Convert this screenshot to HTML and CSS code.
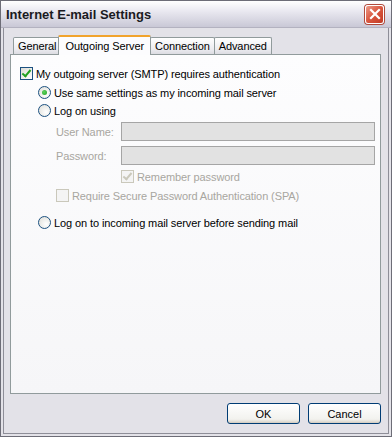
FILE: index.html
```html
<!DOCTYPE html>
<html lang="en">
<head>
    <meta charset="UTF-8">
    <title>Internet E-mail Settings</title>
    <link rel="stylesheet" href="styles.css">
</head>
<body>
    <div class="window">
        <div class="titlebar">
            <span class="title">Internet E-mail Settings</span>
            <div class="close-btn" title="Close">
                <svg width="12" height="12" viewBox="0 0 12 12">
                    <path d="M2 2 L10 10 M10 2 L2 10" stroke="#fff" stroke-width="2.2" stroke-linecap="square"/>
                </svg>
            </div>
        </div>

        <div class="body">
            <div class="tabs">
                <div class="tab">General</div>
                <div class="tab active">Outgoing Server</div>
                <div class="tab">Connection</div>
                <div class="tab">Advanced</div>
            </div>

            <div class="panel">
                <label class="row top">
                    <span class="check checked"></span>
                    My outgoing server (SMTP) requires authentication
                </label>

                <div class="group">
                    <label class="row">
                        <span class="radio selected"></span>
                        Use same settings as my incoming mail server
                    </label>
                    <label class="row">
                        <span class="radio"></span>
                        Log on using
                    </label>

                    <div class="fields">
                        <div class="field">
                            <span class="field-label">User Name:</span>
                            <span class="input"></span>
                        </div>
                        <div class="field">
                            <span class="field-label">Password:</span>
                            <span class="input"></span>
                        </div>
                        <label class="row disabled remember">
                            <span class="check checked disabled"></span>
                            Remember password
                        </label>
                        <label class="row disabled spa">
                            <span class="check disabled"></span>
                            Require Secure Password Authentication (SPA)
                        </label>
                    </div>

                    <label class="row last">
                        <span class="radio"></span>
                        Log on to incoming mail server before sending mail
                    </label>
                </div>
            </div>

            <div class="buttons">
                <button class="btn">OK</button>
                <button class="btn">Cancel</button>
            </div>
        </div>
    </div>
</body>
</html>
```

FILE: styles.css
```css
html, body {
    margin: 0;
    padding: 0;
    background-color: #e3e2e8;
    font-family: "Liberation Sans", Arial, sans-serif;
    font-size: 11px;
    letter-spacing: -0.1px;
    color: #000;
}

.window {
    width: 392px;
    height: 437px;
    box-sizing: border-box;
    border: 1px solid #6d6d77;
    box-shadow: inset 0 0 0 2px #e3e2e8, inset 0 0 0 3px #8e8e98;
    display: flex;
    flex-direction: column;
}

.titlebar {
    height: 26px;
    display: flex;
    align-items: center;
    justify-content: space-between;
    padding: 0 6px 0 5px;
    background: linear-gradient(#ffffff, #e9e8f0 40%, #c9c8d6);
    border-bottom: 1px solid #b3b2c0;
}

.title {
    font-weight: bold;
    font-size: 13px;
    letter-spacing: 0;
    color: #1a1a22;
}

.close-btn {
    width: 17px;
    height: 17px;
    border: 1px solid #fff;
    border-radius: 3px;
    background: linear-gradient(135deg, #ec9a88, #d9563f 50%, #c23a24);
    display: flex;
    align-items: center;
    justify-content: center;
    box-shadow: 0 0 0 1px #b14a3c;
    margin-right: 1px;
}

.body {
    flex: 1;
    padding: 6px 10px 12px 9px;
    display: flex;
    flex-direction: column;
}

.tabs {
    display: flex;
    align-items: flex-end;
    padding-left: 3px;
    height: 20px;
}

.tab {
    height: 16px;
    line-height: 16px;
    padding: 0 4px;
    border: 1px solid #919b9c;
    border-bottom: none;
    border-radius: 2px 2px 0 0;
    background: linear-gradient(#ffffff, #ececf0 70%, #dcdce2);
    margin-right: -1px;
}

.tab.active {
    height: 18px;
    line-height: 18px;
    background: #fcfcfe;
    border-top: 2px solid #f1a32c;
    margin: 0 -1px -1px -2px;
    padding: 0 6px;
    position: relative;
    z-index: 1;
}

.panel {
    flex: 1;
    border: 1px solid #919b9c;
    background: linear-gradient(#fdfdfe, #f6f6f8);
    padding: 12px 0 0 9px;
}

.row {
    display: flex;
    align-items: center;
    gap: 3px;
    height: 13px;
    white-space: nowrap;
}

.row.top {
    margin-bottom: 6px;
}

.group {
    padding-left: 18px;
    display: flex;
    flex-direction: column;
    gap: 5px;
}

.check {
    width: 11px;
    height: 11px;
    border: 1px solid #1c5180;
    background: linear-gradient(135deg, #dcdcd6, #ffffff);
    position: relative;
    flex-shrink: 0;
}

.check.checked::after {
    content: "";
    position: absolute;
    left: 3px;
    top: 0;
    width: 3px;
    height: 7px;
    border: solid #21a121;
    border-width: 0 2px 2px 0;
    transform: rotate(40deg);
}

.check.disabled {
    border-color: #cac8bb;
    background: #f4f4f4;
}

.check.checked.disabled::after {
    border-color: #cac8bb;
}

.radio {
    width: 11px;
    height: 11px;
    border: 1px solid #1c5180;
    border-radius: 50%;
    background: radial-gradient(circle at 65% 65%, #ffffff, #dcdcd6);
    position: relative;
    flex-shrink: 0;
}

.radio.selected::after {
    content: "";
    position: absolute;
    left: 3px;
    top: 3px;
    width: 5px;
    height: 5px;
    border-radius: 50%;
    background: radial-gradient(circle at 40% 40%, #5ed35e, #21a121);
}

.fields {
    padding-left: 18px;
    display: flex;
    flex-direction: column;
    gap: 5px;
}

.field {
    display: flex;
    align-items: center;
    height: 19px;
}

.field-label {
    width: 65px;
    color: #a8a6a0;
}

.input {
    width: 252px;
    height: 17px;
    border: 1px solid #a5a5a5;
    background: #e2e2e2;
}

.row.disabled {
    color: #a8a6a0;
}

.remember {
    padding-left: 65px;
}

.spa {
    margin-top: 1px;
}

.row.last {
    margin-top: 9px;
}

.buttons {
    display: flex;
    justify-content: flex-end;
    gap: 8px;
    padding-top: 9px;
}

.btn {
    width: 73px;
    height: 21px;
    font-family: "Liberation Sans", Arial, sans-serif;
    font-size: 11px;
    border: 1px solid #003c74;
    border-radius: 3px;
    background: linear-gradient(#ffffff, #f2f2ee 80%, #d6d0c5);
    box-shadow: inset 0 -1px 0 #d6d0c5;
    padding: 0;
    color: #000;
}
```
